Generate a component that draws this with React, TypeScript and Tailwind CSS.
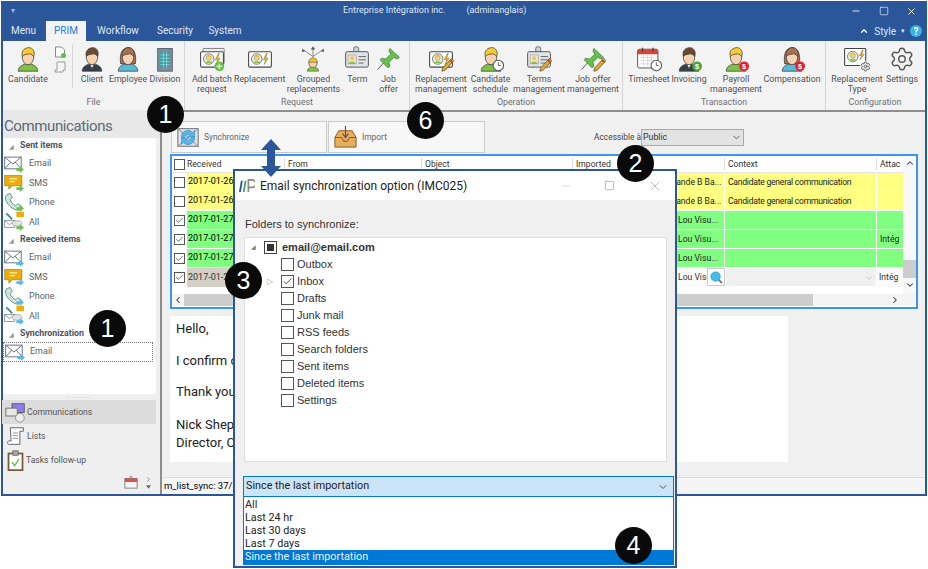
import { ChevronDown, ChevronLeft, ChevronRight, ChevronUp, Check, Minus, Settings, Square, X } from "lucide-react";
import type { ReactNode } from "react";

// icon bits, all in a 32x32 box
const Ico = ({ children, cls = "w-[26px] h-[26px]" }: { children: ReactNode; cls?: string }) => (
  <svg viewBox="0 0 32 32" className={cls}>
    {children}
  </svg>
);

const Head = ({ hair, shirt, long, suit }: { hair: string; shirt: string; long?: boolean; suit?: boolean }) => (
  <g stroke="#3b3b3b" strokeWidth="0.9">
    {long && <path d="M7 22C5 10 9 2 16 2s11 8 9 20z" fill={hair} />}
    <path d="M4 31c0-6 6-9 12-9s12 3 12 9z" fill={shirt} />
    {suit && <path d="M13 22l3 6 3-6z" fill="#fff" />}
    <ellipse cx="16" cy="14" rx="7" ry="9" fill="#f6d2b0" />
    <path d="M9 13C7 5 13 2 17 2c5 0 8 5 6 11-2-3-5-4-7-3-3 0-5 1-7 3z" fill={hair} />
  </g>
);

const Card = ({ bolt = true }: { bolt?: boolean }) => (
  <g>
    <rect x="2" y="7" width="28" height="19" rx="1.5" fill="#fff" stroke="#444" strokeWidth="1.3" />
    <circle cx="12" cy="16" r="6.5" fill="#e8ecd8" stroke="#666" />
    <circle cx="12" cy="14.5" r="3" fill="#f6d2b0" stroke="#777" strokeWidth="0.6" />
    <path d="M9 14c0-3 6-3 6 0z" fill="#f5c518" />
    <path d="M7.5 21c1-3 8-3 9 0z" fill="#86c440" />
    {bolt && <path d="M24 9l-4 8h3l-2 6 5-8h-3l2-6z" fill="#f5b800" stroke="#555" strokeWidth="0.5" />}
  </g>
);

const Pin = () => (
  <g stroke="#3f6b2e" strokeWidth="0.8" fill="#63c24a">
    <path d="M17 3l12 11-3 2-4-2-6 6 1 5-2 2-10-10 2-2 5 1 6-6-2-4z" />
    <path d="M9 21L2 29" fill="none" stroke="#555" strokeWidth="1.2" />
  </g>
);

const Pencil = () => (
  <g>
    <path d="M29 15l3 3-11 12-4 1 1-4z" fill="#e3a82b" stroke="#444" strokeWidth="0.8" />
    <path d="M27 17l3 3" stroke="#c0392b" strokeWidth="2" />
  </g>
);

const Clock = () => (
  <g>
    <circle cx="25" cy="24" r="6.5" fill="#fff" stroke="#555" strokeWidth="1.3" />
    <path d="M25 20v4h3" fill="none" stroke="#555" strokeWidth="1.1" />
  </g>
);

const Dollar = ({ color }: { color: string }) => (
  <g>
    <circle cx="26" cy="25" r="6" fill={color} />
    <text x="26" y="28.5" textAnchor="middle" fontSize="9" fontWeight="700" fill="#fff" fontFamily="Liberation Sans, sans-serif">
      $
    </text>
  </g>
);

const IdBadge = () => (
  <g>
    <rect x="12" y="1" width="6" height="9" rx="2" fill="#cfd6dc" stroke="#555" />
    <rect x="2" y="7" width="28" height="19" rx="2" fill="#dfe4e8" stroke="#555" strokeWidth="1.2" />
    <rect x="5" y="11" width="10" height="11" fill="#f3e6b3" stroke="#888" strokeWidth="0.6" />
    <circle cx="10" cy="15" r="2.4" fill="#e9b98d" />
    <path d="M6 22c1-4 7-4 8 0z" fill="#86c440" />
    <path d="M18 13h9M18 17h9M18 21h6" stroke="#666" strokeWidth="1.2" />
  </g>
);

const blond = { hair: "#f7cb2d", shirt: "#7fc241" };
const man = { hair: "#6b4a2f", shirt: "#34404c", suit: true };
const woman = { hair: "#a8704f", shirt: "#58bcd6", long: true };

const Candidate = () => <Ico><Head {...blond} /></Ico>;
const Client = () => <Ico><Head {...man} /></Ico>;
const Employee = () => <Ico><Head {...woman} /></Ico>;
const Division = () => (
  <Ico>
    <rect x="7" y="3" width="18" height="28" fill="#7f8c96" stroke="#4b555d" />
    <path d="M10 7h12v20H10z" fill="#2f9fa8" />
    <path d="M14 7v20M18 7v20M10 11h12M10 15h12M10 19h12M10 23h12" stroke="#cfe4e6" strokeWidth="0.7" />
  </Ico>
);
const AddBatch = () => (
  <Ico>
    <rect x="5" y="3" width="26" height="19" rx="1" fill="#eee" stroke="#666" />
    <Card />
    <circle cx="25" cy="25" r="6" fill="#5fc043" />
    <path d="M25 21.5v7M21.5 25h7" stroke="#fff" strokeWidth="1.5" />
  </Ico>
);
const Replacement = () => <Ico><Card /></Ico>;
const Grouped = () => (
  <Ico>
    <path d="M16 13V3M16 13L6 6M16 13l10-7M3 4l3 2-3 1zM29 4l-3 2 3 1zM14 4l2-3 2 3z" fill="#555" stroke="#555" strokeWidth="0.8" />
    <ellipse cx="16" cy="21" rx="5" ry="6" fill="#f6d2b0" stroke="#555" />
    <path d="M10.5 20c0-7 11-7 11 0z" fill="#f5c518" stroke="#555" strokeWidth="0.7" />
    <path d="M9 31c0-4 4-5 7-5s7 1 7 5z" fill="#7fc241" stroke="#555" strokeWidth="0.7" />
  </Ico>
);
const Term = () => <Ico><IdBadge /></Ico>;
const JobOffer = () => <Ico><Pin /></Ico>;
const ReplacementMgmt = () => <Ico><Card /><Pencil /></Ico>;
const Schedule = () => <Ico><Head {...blond} /><Clock /></Ico>;
const TermsMgmt = () => <Ico><IdBadge /><Pencil /></Ico>;
const JobMgmt = () => <Ico><Pin /><Pencil /></Ico>;
const Timesheet = () => (
  <Ico>
    <rect x="2" y="4" width="25" height="23" rx="2" fill="#fff" stroke="#555" strokeWidth="1.2" />
    <path d="M2 6a2 2 0 012-2h21a2 2 0 012 2v4H2z" fill="#d9443a" />
    <path d="M8 2v5M21 2v5" stroke="#444" strokeWidth="1.6" />
    <path d="M5 14h19M5 18h19M5 22h19M9 11v14M14 11v14M19 11v14" stroke="#c6c6c6" strokeWidth="0.7" />
    <Clock />
  </Ico>
);
const Invoicing = () => <Ico><Head {...man} /><Dollar color="#47a83a" /></Ico>;
const Payroll = () => <Ico><Head {...blond} /><Dollar color="#e3202c" /></Ico>;
const Compensation = () => <Ico><Head {...woman} /><Dollar color="#e3202c" /></Ico>;
const RepType = () => (
  <div className="relative w-[28px] h-[26px]">
    <Ico>
      <rect x="2" y="3" width="26" height="21" rx="1" fill="#fff" stroke="#444" strokeWidth="1.3" />
      <circle cx="12" cy="13" r="6.5" fill="#e8ecd8" stroke="#666" />
      <circle cx="12" cy="11.5" r="3" fill="#f6d2b0" stroke="#777" strokeWidth="0.6" />
      <path d="M9 11c0-3 6-3 6 0z" fill="#f5c518" />
      <path d="M7.5 18c1-3 8-3 9 0z" fill="#86c440" />
      <path d="M24 5l-4 7h3l-2 5 5-7h-3l2-5z" fill="#f5b800" stroke="#555" strokeWidth="0.5" />
    </Ico>
    <Settings className="absolute right-0 bottom-0 w-[11px] h-[11px] text-[#555] bg-[#f3f3f3] rounded-full" strokeWidth={2} />
  </div>
);
const SettingsIco = () => <Settings className="w-[26px] h-[26px] text-[#555]" strokeWidth={1.3} />;

const Item = ({ w, icon, label }: { w: string; icon: ReactNode; label: string[] }) => (
  <div className={`${w} h-full flex flex-col items-center`}>
    <div className="h-[29px] flex items-center justify-center">{icon}</div>
    <div className="text-center text-[8.8px] leading-[10px] mt-[1px] text-[#505050] whitespace-nowrap">
      {label.map((l) => (
        <div key={l}>{l}</div>
      ))}
    </div>
  </div>
);

const Group = ({ w, label, children }: { w: string; label: string; children: ReactNode }) => (
  <div className={`${w} h-full flex flex-col border-r border-[#d4d4d4] shrink-0`}>
    <div className="flex-1 flex pt-[3px]">{children}</div>
    <div className="h-[16px] text-center text-[8.8px] leading-[16px] text-[#707070]">{label}</div>
  </div>
);

const Ribbon = () => (
  <div className="h-[69px] bg-[#f3f3f3] flex shrink-0">
    <Group w="w-[182px]" label="File">
      <Item w="w-[50px]" icon={<Candidate />} label={["Candidate"]} />
      <div className="w-[14px] flex flex-col items-center gap-[3px] pt-[2px]">
        <svg viewBox="0 0 12 12" className="w-[12px] h-[12px]"><path d="M1.5 1h6l3 3v7h-9z" fill="#fff" stroke="#888" /><circle cx="9.5" cy="9.5" r="2.5" fill="#5fc043" /></svg>
        <svg viewBox="0 0 12 12" className="w-[12px] h-[12px]"><path d="M3 1h8v8H9v2H1V9h2z" fill="#f3f3f3" stroke="#999" /></svg>
      </div>
      <div className="w-[6px] h-[44px] border-r border-[#d4d4d4] mr-[1px]" />
      <Item w="w-[36px]" icon={<Client />} label={["Client"]} />
      <Item w="w-[36px]" icon={<Employee />} label={["Employee"]} />
      <Item w="w-[38px]" icon={<Division />} label={["Division"]} />
    </Group>
    <Group w="w-[225px]" label="Request">
      <Item w="w-[54px]" icon={<AddBatch />} label={["Add batch", "request"]} />
      <Item w="w-[42px]" icon={<Replacement />} label={["Replacement"]} />
      <Item w="w-[66px]" icon={<Grouped />} label={["Grouped", "replacements"]} />
      <Item w="w-[22px]" icon={<Term />} label={["Term"]} />
      <Item w="w-[41px]" icon={<JobOffer />} label={["Job", "offer"]} />
    </Group>
    <Group w="w-[213px]" label="Operation">
      <Item w="w-[62px]" icon={<ReplacementMgmt />} label={["Replacement", "management"]} />
      <Item w="w-[37px]" icon={<Schedule />} label={["Candidate", "schedule"]} />
      <Item w="w-[60px]" icon={<TermsMgmt />} label={["Terms", "management"]} />
      <Item w="w-[48px]" icon={<JobMgmt />} label={["Job offer", "management"]} />
    </Group>
    <Group w="w-[203px]" label="Transaction">
      <Item w="w-[52px]" icon={<Timesheet />} label={["Timesheet"]} />
      <Item w="w-[28px]" icon={<Invoicing />} label={["Invoicing"]} />
      <Item w="w-[66px]" icon={<Payroll />} label={["Payroll", "management"]} />
      <Item w="w-[46px]" icon={<Compensation />} label={["Compensation"]} />
    </Group>
    <div className="flex-1 flex flex-col h-full">
      <div className="flex-1 flex pt-[3px]">
        <Item w="w-[62px]" icon={<RepType />} label={["Replacement", "Type"]} />
        <Item w="w-[28px]" icon={<SettingsIco />} label={["Settings"]} />
      </div>
      <div className="h-[16px] text-center text-[8.8px] leading-[16px] text-[#707070] pr-[1px]">Configuration</div>
    </div>
  </div>
);

// left panel icons, drawn with a small arrow that is green for sent, blue for received
const Arrow = ({ color }: { color: string }) => (
  <path d="M20 25h5v-3l6 5-6 5v-3h-5z" transform="translate(-2 -3)" fill={color} />
);

const KindIcon = ({ kind, color }: { kind: string; color: string }) => (
  <svg viewBox="0 0 32 32" className="w-[22px] h-[22px] shrink-0">
    {kind === "Email" && (
      <g fill="#fff" stroke="#67737c" strokeWidth="1.4">
        <rect x="1" y="6" width="24" height="17" />
        <path d="M1 6l12 10L25 6M1 23l9-10M25 23l-9-10" fill="none" />
      </g>
    )}
    {kind === "SMS" && (
      <g>
        <path d="M1 5h25v15H12l-5 5v-5H1z" fill="#e9ad0c" stroke="#a87a06" />
        <path d="M8 10h11M8 14h8" stroke="#fff" strokeWidth="1.4" />
      </g>
    )}
    {kind === "Phone" && (
      <path d="M4 4l5-2 3 6-3 3c1 4 4 7 8 9l3-3 6 4-2 4c-2 2-5 2-9 0C8 22 3 15 2 9c0-2 1-4 2-5z" fill="#cfe5dc" stroke="#4f8f83" strokeWidth="1.3" />
    )}
    {kind === "All" && (
      <g>
        <rect x="18" y="1" width="11" height="8" fill="#e9ad0c" />
        <path d="M3 4c3 0 5 5 9 8" stroke="#4f8f83" strokeWidth="3" fill="none" />
        <rect x="1" y="14" width="14" height="10" fill="#fff" stroke="#67737c" />
        <path d="M1 14l7 6 7-6" fill="none" stroke="#67737c" />
        <ellipse cx="19" cy="18" rx="7" ry="4" fill="#e5e5e5" stroke="#999" />
      </g>
    )}
    <Arrow color={color} />
  </svg>
);

const Section = ({ label }: { label: string }) => (
  <div className="h-[16px] flex items-center text-[8.8px] font-bold text-[#4a5560]">
    <span className="w-[17px] pl-[6px] text-[6px] text-[#999]">◢</span>
    {label}
  </div>
);

const NavRow = ({ kind, color, selected }: { kind: string; color: string; selected?: boolean }) => (
  <div className={`h-[19.5px] flex items-center text-[9px] text-[#5a5f66] pl-[1px] ${selected ? "border border-dotted border-[#777] mr-[3px]" : ""}`}>
    <KindIcon kind={kind} color={color} />
    <span className="ml-[3px]">{kind}</span>
  </div>
);

const kinds = ["Email", "SMS", "Phone", "All"];

const Sidebar = () => (
  <div className="w-[157px] shrink-0 bg-[#efefef] flex flex-col">
    <div className="h-[28px] bg-[#e8e8e8] text-[15px] tracking-[-0.4px] leading-[24px] pt-[4px] pl-[1px] text-[#5c6a77]">Communications</div>
    <div className="h-[256px] w-[153px] bg-white flex flex-col">
      <Section label="Sent items" />
      {kinds.map((k) => <NavRow key={k} kind={k} color="#6dc04a" />)}
      <Section label="Received items" />
      {kinds.map((k) => <NavRow key={k + "r"} kind={k} color="#58b8e8" />)}
      <Section label="Synchronization" />
      <NavRow kind="Email" color="#58b8e8" selected />
    </div>
    <div className="h-[6px] w-[153px] flex items-center justify-center text-[#999] text-[6px] leading-none tracking-[1px]">··········</div>
    <div className="h-[24px] w-[154px] bg-[#dcdcdc] flex items-center pl-[3px] text-[8.6px] text-[#555] -ml-px">
      <svg viewBox="0 0 24 24" className="w-[21px] h-[21px]">
        <rect x="8" y="2" width="14" height="10" fill="#8f7df0" stroke="#555" />
        <rect x="1" y="7" width="13" height="9" fill="#e8e8e8" stroke="#666" />
        <circle cx="17" cy="18" r="5" fill="#eee" stroke="#888" />
      </svg>
      <span className="ml-[1px]">Communications</span>
    </div>
    <div className="h-[24px] flex items-center pl-[2px] text-[8.6px] text-[#555]">
      <svg viewBox="0 0 24 24" className="w-[21px] h-[21px]">
        <path d="M6 2h15v4h-4v15H5c-3 0-3-4 0-4h2z" fill="#fff" stroke="#555" />
        <path d="M9 8h6M9 11h6M9 14h6" stroke="#888" />
      </svg>
      <span className="ml-[1px]">Lists</span>
    </div>
    <div className="h-[24px] flex items-center pl-[2px] text-[8.6px] text-[#555]">
      <svg viewBox="0 0 24 24" className="w-[21px] h-[21px]">
        <rect x="4" y="4" width="16" height="19" fill="#fff" stroke="#7a5a3a" strokeWidth="2" />
        <rect x="9" y="1" width="6" height="5" fill="#aaa" stroke="#666" />
        <path d="M8 14l3 4 5-8" fill="none" stroke="#6dc04a" strokeWidth="1.6" />
      </svg>
      <span>Tasks follow-up</span>
    </div>
    <div className="flex-1 flex items-center justify-end pr-[8px] gap-[7px] pb-[2px]">
      <svg viewBox="0 0 16 16" className="w-[14px] h-[14px]">
        <rect x="1" y="4" width="14" height="11" fill="#f5f5f5" stroke="#777" />
        <rect x="1" y="4" width="14" height="4" fill="#d9544a" />
        <path d="M6 4l2-3 2 3" fill="none" stroke="#777" />
      </svg>
      <div className="flex flex-col items-center text-[#666]">
        <ChevronRight className="w-[7px] h-[7px]" strokeWidth={2.5} />
        <svg viewBox="0 0 6 4" className="w-[5px] h-[4px] mt-[2px]"><path d="M0 0h6L3 4z" fill="#666" /></svg>
      </div>
    </div>
  </div>
);

const widths = ["w-[98px]", "w-[137px]", "w-[151px]", "w-[152px]", "w-[152px]", "w-[25px]"];

type Row = { color: string; checked: boolean; date: string; who: string; pad: string; ctx: string; att: string };
const rows: Row[] = [
  { color: "bg-[#ffff80]", checked: false, date: "2017-01-26", who: "Amande B Ba...", pad: "pl-[90px]", ctx: "Candidate general communication", att: "" },
  { color: "bg-[#ffff80]", checked: false, date: "2017-01-26", who: "Amande B Ba...", pad: "pl-[90px]", ctx: "Candidate general communication", att: "" },
  { color: "bg-[#80ff80]", checked: true, date: "2017-01-27", who: "Lou Visu...", pad: "pl-[105px]", ctx: "", att: "" },
  { color: "bg-[#80ff80]", checked: true, date: "2017-01-27", who: "Lou Visu...", pad: "pl-[105px]", ctx: "", att: "Intég" },
  { color: "bg-[#80ff80]", checked: true, date: "2017-01-27", who: "Lou Visu...", pad: "pl-[105px]", ctx: "", att: "" },
];

const Box = ({ checked, size = "w-[11px] h-[11px]" }: { checked?: boolean; size?: string }) => (
  <div className={`${size} border border-[#555] bg-white flex items-center justify-center shrink-0`}>
    {checked && <Check className="w-full h-full text-[#444]" strokeWidth={2} />}
  </div>
);

const Table = () => (
  <div className="ml-[8px] mt-[1px] w-[748px] h-[155px] border-2 border-[#3a96f0] bg-white flex flex-col text-[8.6px] text-[#333] shrink-0">
    <div className="flex flex-1 min-h-0">
      <div className="w-[731px] shrink-0 overflow-hidden whitespace-nowrap">
        <div className="h-[17px] flex items-center border-b border-[#e4e4e4]">
          <div className="w-[15px] pl-[2px] shrink-0"><Box /></div>
          <div className={`${widths[0]} shrink-0 border-r border-[#ddd]`}>Received</div>
          <div className={`${widths[1]} pl-[3px] shrink-0 border-r border-[#ddd]`}>From</div>
          <div className={`${widths[2]} pl-[3px] shrink-0 border-r border-[#ddd]`}>Object</div>
          <div className={`${widths[3]} pl-[3px] shrink-0 border-r border-[#ddd]`}>Imported</div>
          <div className={`${widths[4]} pl-[3px] shrink-0 border-r border-[#ddd]`}>Context</div>
          <div className={`${widths[5]} pl-[3px] shrink-0`}>Attac</div>
        </div>
        {rows.map((r, i) => (
          <div key={i} className="h-[19px] flex items-center border-b border-white">
            <div className="w-[15px] pl-[2px] shrink-0"><Box checked={r.checked} /></div>
            <div className={`${widths[0]} ${r.color} h-full pl-[1px] flex items-center shrink-0 text-black text-[9px]`}>{r.date}</div>
            <div className={`flex-1 ${r.color} h-full flex shrink-0 text-[#222]`}>
              <div className="w-[137px]" />
              <div className="w-[151px]" />
              <div className={`w-[152px] ${r.pad} flex items-center border-r border-white`}>{r.who}</div>
              <div className="w-[152px] pl-[3px] flex items-center border-r border-white tracking-[-0.25px]">{r.ctx}</div>
              <div className="w-[25px] pl-[3px] flex items-center overflow-hidden">{r.att}</div>
            </div>
          </div>
        ))}
        <div className="h-[19px] flex items-center bg-[#fafafa]">
          <div className="w-[15px] pl-[2px] shrink-0"><Box checked /></div>
          <div className={`${widths[0]} bg-[#d4d0c8] h-full pl-[1px] flex items-center shrink-0 text-[9px]`}>2017-01-27</div>
          <div className="w-[137px] shrink-0" />
          <div className="w-[151px] shrink-0" />
          <div className="w-[152px] shrink-0 pl-[105px] flex items-center relative h-full">
            Lou Visu
            <div className="absolute right-0 top-0 w-[18px] h-[18px] border border-[#ccc] bg-white flex items-center justify-center">
              <svg viewBox="0 0 14 14" className="w-[13px] h-[13px]">
                <path d="M9 9l4 4" stroke="#777" strokeWidth="2" />
                <circle cx="6" cy="6" r="5" fill="#45bdea" stroke="#2f9fd8" />
              </svg>
            </div>
          </div>
          <div className="w-[152px] shrink-0 h-full bg-[#f0f0f0] border border-white flex items-center justify-end pr-[2px]">
            <ChevronDown className="w-[10px] h-[10px] text-[#bbb]" />
          </div>
          <div className="w-[25px] pl-[2px] shrink-0 overflow-hidden">Intég</div>
        </div>
      </div>
      <div className="w-[13px] bg-[#f8f8f8] flex flex-col items-center justify-between pt-[2px] pb-[4px]">
        <ChevronUp className="w-[10px] h-[10px] text-[#333]" strokeWidth={2.5} />
        <div className="flex flex-col items-center">
          <div className="w-[13px] h-[18px] bg-[#cdcdcd] mb-[1px]" />
          <ChevronDown className="w-[10px] h-[10px] text-[#333] mt-[1px]" strokeWidth={2.5} />
        </div>
      </div>
    </div>
    <div className="h-[12px] flex items-center bg-[#f4f4f4] mb-[1px]">
      <ChevronLeft className="w-[12px] h-[10px] text-[#333]" strokeWidth={2.5} />
      <div className="w-[629px] h-full bg-[#cdcdcd]" />
      <div className="flex-1" />
      <ChevronRight className="w-[10px] h-[10px] text-[#333] mr-[16px]" strokeWidth={2.5} />
    </div>
  </div>
);

const Content = () => (
  <div className="flex-1 flex flex-col bg-[#f0f0f0] border-l-2 border-t-2 border-[#8e8e8e] min-w-0">
    <div className="flex items-center pl-[9px] pt-[9px] h-[41px] shrink-0">
      <div className="w-[156px] h-[32px] bg-[#f7f7f7] border border-[#ccc] flex items-center pl-[4px] gap-[4px] text-[8.4px] text-[#666]">
        <svg viewBox="0 0 26 26" className="w-[24px] h-[24px]">
          <rect x="2" y="4" width="22" height="19" fill="#dfe3e6" stroke="#666" />
          <path d="M2 4l22 19M24 4L2 23" stroke="#888" />
          <path d="M6 14a7 7 0 0112-6l2-2v7h-7l2-2a4 4 0 00-6 3z" fill="#56b6e8" stroke="#2f7fb0" strokeWidth="0.6" />
          <path d="M20 13a7 7 0 01-12 6l-2 2v-7h7l-2 2a4 4 0 006-3z" fill="#56b6e8" stroke="#2f7fb0" strokeWidth="0.6" />
        </svg>
        Synchronize
      </div>
      <div className="w-[157px] h-[32px] ml-[1px] bg-[#f7f7f7] border border-[#ccc] flex items-center pl-[4px] gap-[4px] text-[8.4px] text-[#666]">
        <svg viewBox="0 0 26 26" className="w-[25px] h-[25px]">
          <path d="M2 13l4-7h14l4 7v10H2z" fill="#e8ad5e" stroke="#8a5c20" />
          <path d="M2 13h7l2 4h4l2-4h7" fill="none" stroke="#8a5c20" />
          <path d="M13 1v11M10 9l3 4 3-4" fill="none" stroke="#555" strokeWidth="1.2" />
        </svg>
        Import
      </div>
      <div className="ml-[109px] w-[45px] text-[8.4px] text-[#444] whitespace-nowrap">Accessible à</div>
      <div className="ml-[2px] w-[103px] h-[17px] bg-[#e3e3e3] border border-[#aaa] flex items-center justify-between px-[1px] text-[8.8px] text-[#333] mt-[1px]">
        Public
        <ChevronDown className="w-[11px] h-[11px] text-[#555]" />
      </div>
    </div>
    <Table />
    <div className="ml-[8px] mt-[7px] w-[618px] h-[146px] bg-white pl-[6px] pt-[4px] text-[13px] leading-[18px] text-[#222] shrink-0 overflow-hidden">
      <div>Hello,</div>
      <div className="mt-[14px]">I confirm our meeting.</div>
      <div className="mt-[13px]">Thank you,</div>
      <div className="mt-[15px]">Nick Shepherd</div>
      <div>Director, Customer service</div>
    </div>
    <div className="flex-1" />
    <div className="h-[17px] bg-[#f4f4f4] border-t border-[#ddd] pl-[2px] text-[9.5px] leading-[16px] text-black">m_list_sync: 37/37</div>
  </div>
);

const folders = ["Outbox", "Inbox", "Drafts", "Junk mail", "RSS feeds", "Search folders", "Sent items", "Deleted items", "Settings"];
const ranges = ["All", "Last 24 hr", "Last 30 days", "Last 7 days"];

const Dialog = () => (
  <div className="absolute left-[233px] top-[169px] w-[444px] h-[399px] border-2 border-[#2b579a] bg-[#f0f0f0] flex flex-col">
    <div className="h-[29px] bg-white flex items-center shrink-0 pl-[3px] pr-[12px] text-[12px] text-[#222] whitespace-nowrap">
      <svg viewBox="0 0 18 16" className="w-[17px] h-[15px]">
        <path d="M1 15L3 3h2L3 15z" fill="#2b579a" />
        <path d="M5 15L7 3h2L7 15z" fill="#4aa564" />
        <path d="M11 15V2h4a3 3 0 010 8h-4" fill="none" stroke="#8a8a8a" strokeWidth="1.8" />
      </svg>
      <span className="ml-[5px]">Email synchronization option (IMC025)</span>
      <Minus className="w-[12px] h-[12px] text-[#ddd] ml-auto" />
      <Square className="w-[11px] h-[11px] text-[#999] ml-[32px]" strokeWidth={1.5} />
      <X className="w-[16px] h-[16px] text-[#999] ml-[32px]" strokeWidth={1} />
    </div>
    <div className="font-['Liberation_Sans',sans-serif] text-[11px] text-[#333] pl-[10px] mt-[18px] leading-[13px]">Folders to synchronize:</div>
    <div className="ml-[9px] mt-[6px] w-[423px] h-[225px] bg-white border border-[#ddd] font-['Liberation_Sans',sans-serif] text-[11px] text-[#333] pt-[1px] shrink-0">
      <div className="h-[17px] flex items-center pl-[6px]">
        <span className="text-[6px] text-[#777] w-[13px]">◢</span>
        <div className="w-[13px] h-[13px] border border-[#444] flex items-center justify-center">
          <div className="w-[7px] h-[7px] bg-[#333]" />
        </div>
        <span className="ml-[5px] font-bold">email@email.com</span>
      </div>
      {folders.map((f) => (
        <div key={f} className="h-[17px] flex items-center pl-[36px] relative">
          {f === "Inbox" && <span className="absolute left-[22px] text-[8px] text-[#aaa]">▷</span>}
          <Box checked={f === "Inbox"} size="w-[13px] h-[13px]" />
          <span className="ml-[3px]">{f}</span>
        </div>
      ))}
    </div>
    <div className="ml-[8px] mt-[14px] w-[431px] h-[21px] bg-[#cce4f7] border border-[#0078d7] flex items-center justify-between pl-[2px] pr-[4px] text-[10.8px] text-[#222] shrink-0">
      Since the last importation
      <ChevronDown className="w-[12px] h-[12px] text-[#555]" />
    </div>
    <div className="ml-[8px] w-[431px] bg-white border border-[#0078d7] border-t-0 text-[10.8px] leading-[13px] text-[#222] pt-[1px] shrink-0">
      {ranges.map((r) => (
        <div key={r} className="pl-[1px]">{r}</div>
      ))}
      <div className="pl-[1px] h-[14px] bg-[#0078d7] text-[#e8f2fb]">Since the last importation</div>
    </div>
  </div>
);

const Callout = ({ n, cls }: { n: number; cls: string }) => (
  <div className={`absolute ${cls} w-[37px] h-[37px] rounded-full bg-[#0a0a0a] text-white flex items-center justify-center text-[25px] font-['Liberation_Sans',sans-serif]`}>
    {n}
  </div>
);

export default function App() {
  return (
    <div className="relative w-[928px] h-[569px] bg-white overflow-hidden font-['Roboto',sans-serif]">
      <div className="ml-px mt-px w-[926px] h-[495px] border-x-2 border-b-2 border-[#2b579a] flex flex-col bg-[#f0f0f0]">
        <div className="h-[20px] bg-[#2b579a] flex items-center text-[9px] text-[#dfe7f3] shrink-0">
          <span className="ml-[8px] text-[8px] text-[#aab8d0]">▾</span>
          <span className="ml-[328px]">Entreprise Intégration inc.</span>
          <span className="ml-[21px]">(adminanglais)</span>
          <Minus className="w-[10px] h-[10px] ml-auto text-white" />
          <Square className="w-[10px] h-[10px] ml-[18px] text-white" strokeWidth={1.5} />
          <X className="w-[11px] h-[11px] ml-[17px] mr-[8px] text-white" />
        </div>
        <div className="h-[20px] bg-[#2b579a] flex items-end text-[10px] text-[#dfe7f3] shrink-0">
          <div className="w-[43px] h-[20px] pl-[8px] leading-[20px]">Menu</div>
          <div className="w-[40px] h-[20px] bg-[#f3f3f3] text-[#2b7cd3] text-center leading-[20px]">PRIM</div>
          <div className="w-[64px] h-[20px] text-center leading-[20px]">Workflow</div>
          <div className="w-[50px] h-[20px] text-center leading-[20px]">Security</div>
          <div className="w-[50px] h-[20px] text-center leading-[20px]">System</div>
          <div className="ml-auto flex items-center h-[20px] pr-[3px]">
            <ChevronUp className="w-[10px] h-[10px] text-white" strokeWidth={3} />
            <span className="ml-[5px]">Style</span>
            <span className="ml-[5px] text-[7px]">▾</span>
            <div className="ml-[5px] w-[12px] h-[12px] rounded-full bg-[#35b4e6] text-white text-[10px] font-bold flex items-center justify-center">?</div>
          </div>
        </div>
        <Ribbon />
        <div className="flex flex-1 min-h-0">
          <Sidebar />
          <Content />
        </div>
      </div>

      <Dialog />

      <svg viewBox="0 0 22 38" className="absolute left-[260px] top-[139px] w-[22px] h-[38px]">
        <path d="M11 0l10 11h-6v16h6L11 38 1 27h6V11H1z" fill="#2b579a" />
      </svg>

      <Callout n={1} cls="left-[147px] top-[96px]" />
      <Callout n={1} cls="left-[89px] top-[310px]" />
      <Callout n={6} cls="left-[407px] top-[102px]" />
      <Callout n={2} cls="left-[617px] top-[145px]" />
      <Callout n={3} cls="left-[225px] top-[262px]" />
      <Callout n={4} cls="left-[615px] top-[527px]" />
    </div>
  );
}
